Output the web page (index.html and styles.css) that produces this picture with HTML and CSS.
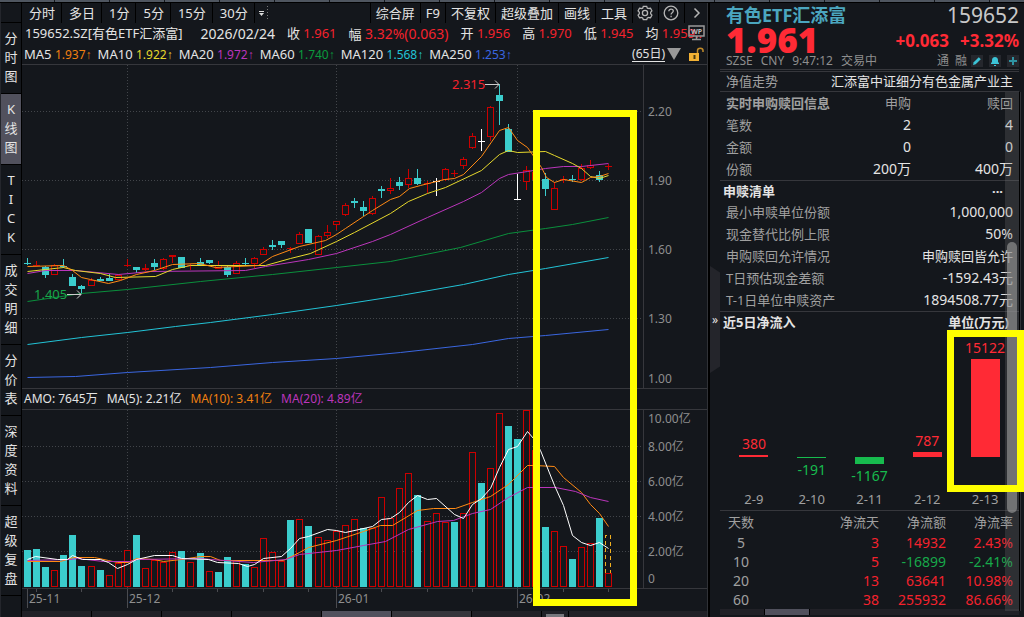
FILE: index.html
```html
<!DOCTYPE html>
<html lang="zh-CN">
<head>
    <meta charset="UTF-8">
    <title>159652.SZ 有色ETF汇添富</title>
    <link rel="stylesheet" href="styles.css">
</head>
<body>
    <div class="top-strip"></div>
    <div class="layout">
        <nav class="sidebar">
            <button>分<br>时<br>图</button>
            <button class="active">K<br>线<br>图</button>
            <button>T<br>I<br>C<br>K</button>
            <button>成<br>交<br>明<br>细</button>
            <button>分<br>价<br>表</button>
            <button>深<br>度<br>资<br>料</button>
            <button>超<br>级<br>复<br>盘</button>
        </nav>

        <main class="main">
            <div class="toolbar">
                <button class="period">分时</button>
                <button class="period">多日</button>
                <button class="period">1分</button>
                <button class="period">5分</button>
                <button class="period">15分</button>
                <button class="period">30分</button>
                <button class="more" aria-label="更多周期">
                    <svg width="14" height="18" viewBox="0 0 14 18"><path d="M1 7.500h5" stroke="#ddd"/><path d="M1 9h5l-2.500 3z" fill="#ddd"/><path d="M9.500 2v14" stroke="#777" stroke-dasharray="1 2"/></svg>
                </button>
                <span class="spacer"></span>
                <button>综合屏</button>
                <button>F9</button>
                <button>不复权</button>
                <button>超级叠加</button>
                <button>画线</button>
                <button>工具</button>
                <button class="icon" aria-label="设置">
                    <svg width="16" height="16" viewBox="0 0 16 16" fill="none" stroke="#b5b5b5" stroke-width="1.3"><path d="M6.300 1.300h3.400l.6 1.800 1.900.4 1.300-.3 1.400 2.600-1.200 1.400v1.600l1.200 1.400-1.400 2.600-1.800-.3-1.400.5-.6 1.700H6.300l-.6-1.700-1.400-.5-1.800.3-1.400-2.600 1.200-1.400V7.200L1.100 5.800l1.400-2.600 1.800.3 1.400-.4z"/><circle cx="8" cy="8" r="2.600"/></svg>
                </button>
                <button class="icon" aria-label="帮助">
                    <svg width="16" height="16" viewBox="0 0 16 16" fill="none" stroke="#b5b5b5" stroke-width="1.3"><circle cx="8" cy="8" r="6.800"/><path d="M5.800 6.300c0-3 4.500-2.700 4.500-.2 0 1.600-2.200 1.600-2.200 3.300M8.100 10.800v1.400"/></svg>
                </button>
                <button class="icon last" aria-label="展开">
                    <svg width="16" height="16" viewBox="0 0 16 16" fill="none" stroke="#b5b5b5" stroke-width="1.5"><path d="M5.500 3.500L10 8l-4.500 4.500"/></svg>
                </button>
            </div>

            <div class="quote">
                <span class="symbol">159652.SZ[有色ETF汇添富]</span>
                <span class="date">2026/02/24</span>
                <span>收 <b class="red">1.961</b></span>
                <span>幅 <b class="red wide">3.32%(0.063)</b></span>
                <span>开 <b class="red">1.956</b></span>
                <span>高 <b class="red">1.970</b></span>
                <span>低 <b class="red">1.945</b></span>
                <span>均 <b class="red">1.959..</b></span>
                <svg class="wp" width="17" height="16" viewBox="0 0 17 16"><path d="M1 1h15v10H1zM8.500 11v3M4 14.500h9" fill="none" stroke="#999" stroke-width="1.5"/><text x="8.500" y="9" text-anchor="middle">WP</text></svg>
            </div>

            <div class="averages">
                <span>MA5 <b class="orange">1.937<i>↑</i></b></span>
                <span>MA10 <b class="yellow">1.922<i>↑</i></b></span>
                <span>MA20 <b class="purple">1.972<i>↑</i></b></span>
                <span>MA60 <b class="green">1.740<i>↑</i></b></span>
                <span>MA120 <b class="cyan">1.568<i>↑</i></b></span>
                <span>MA250 <b class="blue">1.253<i>↑</i></b></span>
                <span class="spacer"></span>
                <button class="range">(65日)</button>
                <svg width="14" height="12" viewBox="0 0 14 12"><path d="M0 0h14L7 12z" fill="#999"/></svg>
                <svg class="lock" width="16" height="15" viewBox="0 0 16 15"><path d="M0 6h10v8H0z" fill="#f2b134"/><path d="M4.500 8h2v4h-2z" fill="#4a3a10"/><path d="M8.500 6V3.500C8.500.5 14 .5 14 3.500V5" fill="none" stroke="#c08a2a" stroke-width="1.5"/></svg>
            </div>

            <svg class="chart" id="price" viewBox="22 65 685 323"></svg>

            <div class="amount">
                <span>AMO: 7645万</span>
                <span>MA(5): 2.21亿</span>
                <span class="orange">MA(10): 3.41亿</span>
                <span class="purple">MA(20): 4.89亿</span>
            </div>

            <svg class="chart" id="volume" viewBox="22 410 685 201"></svg>

            <div class="tabs main-tabs">
                <i></i><i></i><i></i><i></i><i class="on"></i><i class="half"></i><i></i><i class="win"></i><i></i>
            </div>
            <div class="mark mark-chart"></div>
        </main>

        <aside class="panel">
            <button class="collapse" aria-label="收起">»</button>
            <div class="content">
                <header class="head">
                    <div class="head-row">
                        <h1>有色ETF汇添富</h1>
                        <span class="code">159652</span>
                    </div>
                    <div class="head-row price-row">
                        <strong class="last-price">1.961</strong>
                        <span class="change">+0.063</span>
                        <span class="change">+3.32%</span>
                    </div>
                    <div class="head-row info">
                        <span>SZSE</span><span>CNY</span><span>9:47:12</span><span>交易中</span>
                        <span class="spacer"></span>
                        <span class="tag">通</span><span class="tag">融</span>
                        <button aria-label="编辑"><svg width="12" height="12" viewBox="0 0 12 12"><path d="M2 10l.7-2.700L7.800 2.200l2 2L4.700 9.300z" fill="#3cc3d6"/></svg></button>
                        <button aria-label="提醒"><svg width="12" height="12" viewBox="0 0 12 12"><path d="M2 9V8l1-1V5c0-4 6-4 6 0v2l1 1v1zM5 10h2v1H5z" fill="#3cc3d6"/></svg></button>
                        <button aria-label="添加"><svg width="12" height="12" viewBox="0 0 12 12"><path d="M6 2v8M2 6h8" stroke="#2f93a3" stroke-width="2"/></svg></button>
                    </div>
                </header>

                <div class="row trend"><span>净值走势</span><a href="#">汇添富中证细分有色金属产业主</a></div>

                <table class="live">
                    <tr><th>实时申购赎回信息</th><td class="dim">申购</td><td class="dim">赎回</td></tr>
                    <tr><td>笔数</td><td>2</td><td>4</td></tr>
                    <tr><td>金额</td><td>0</td><td>0</td></tr>
                    <tr><td>份额</td><td>200万</td><td>400万</td></tr>
                </table>

                <section class="list">
                    <div class="row title"><h2>申赎清单</h2><button class="dots">···</button></div>
                    <div class="row"><span>最小申赎单位份额</span><b>1,000,000</b></div>
                    <div class="row"><span>现金替代比例上限</span><b>50%</b></div>
                    <div class="row"><span>申购赎回允许情况</span><b class="cn">申购赎回皆允许</b></div>
                    <div class="row"><span>T日预估现金差额</span><b>-1592.43元</b></div>
                    <div class="row"><span>T-1日单位申赎资产</span><b>1894508.77元</b></div>
                </section>

                <section class="flow">
                    <div class="row title"><h2>近5日净流入</h2><h2>单位(万元)</h2></div>
                    <div class="bars">
                        <div class="col"><div class="up"><span>380</span><i style="height:2px"></i></div><div class="down"></div><small>2-9</small></div>
                        <div class="col"><div class="up"></div><div class="down"><i style="height:1px"></i><span>-191</span></div><small>2-10</small></div>
                        <div class="col"><div class="up"></div><div class="down"><i style="height:7px"></i><span>-1167</span></div><small>2-11</small></div>
                        <div class="col"><div class="up"><span>787</span><i style="height:5px"></i></div><div class="down"></div><small>2-12</small></div>
                        <div class="col"><div class="up"><span>15122</span><i style="height:98px"></i></div><div class="down"></div><small>2-13</small></div>
                    </div>
                </section>

                <table class="days">
                    <tr><th>天数</th><th>净流天</th><th>净流额</th><th>净流率</th></tr>
                    <tr class="red"><td>5</td><td>3</td><td>14932</td><td>2.43%</td></tr>
                    <tr class="down-row"><td>10</td><td class="red">5</td><td>-16899</td><td>-2.41%</td></tr>
                    <tr class="red"><td>20</td><td>13</td><td>63641</td><td>10.98%</td></tr>
                    <tr class="red"><td>60</td><td>38</td><td>255932</td><td>86.66%</td></tr>
                </table>
                <div class="tabs panel-tabs"><i></i><i class="on"></i><i></i></div>
                <div class="track"><div class="thumb"></div></div>
                <div class="mark mark-flow"></div>
            </div>
        </aside>
    </div>
    <script src="chart.js"></script>
</body>
</html>
```
FILE: styles.css
```css
* {
    box-sizing: border-box;
}

body {
    margin: 0;
    min-height: 100vh;
    background-color: #14171c;
    color: #e4e4e4;
    font-family: "Noto Sans", "Noto Sans CJK SC", sans-serif;
    font-size: 13px;
    overflow: hidden;
}

button {
    margin: 0;
    padding: 0;
    border: none;
    background: none;
    color: inherit;
    font: inherit;
    cursor: pointer;
}

b, i, small, h1, h2 {
    margin: 0;
    font-weight: normal;
    font-style: normal;
}

a {
    color: inherit;
    text-decoration: none;
}

svg {
    display: block;
    flex: none;
}

.red { color: #f5222d; }
.orange { color: #f08010; }
.yellow { color: #e6d82c; }
.purple { color: #bb35bb; }
.green { color: #0a9a3c; }
.cyan { color: #22c3d6; }
.blue { color: #3a66e0; }

.spacer {
    flex: 1;
}

.top-strip {
    height: 3px;
    border-bottom: 1px solid #000;
    background: repeating-linear-gradient(90deg, #4f5660 0 54px, #14171c 54px 55px);
}

.layout {
    display: grid;
    grid-template-columns: 22px minmax(0, 1fr) 316px;
}

/* left navigation */
.sidebar {
    padding-top: 19px;
    border-left: 1px solid #24262c;
    border-right: 1px solid #000;
    display: flex;
    flex-direction: column;
}

.sidebar button {
    padding: 6px 0 7px;
    border-top: 1px solid #000;
    line-height: 19px;
    text-align: center;
}

.sidebar button:last-child {
    border-bottom: 1px solid #000;
}

.sidebar .active {
    background-color: #51515d;
}

.main {
    position: relative;
    border-right: 1px solid #303237;
}

.toolbar {
    display: flex;
    height: 20px;
    line-height: 18px;
}

.toolbar button {
    padding: 0 5px;
    border-left: 1px solid #000;
    white-space: nowrap;
}

.toolbar .period {
    padding: 0 6px 0 7px;
    border-left: none;
    border-right: 1px solid #000;
}

.toolbar .more {
    padding: 0 3px;
    border-left: none;
}

.toolbar .icon {
    padding: 0 5px 0 4px;
}

.toolbar .last {
    padding-right: 2px;
}

.quote, .averages {
    position: relative;
    display: flex;
    align-items: center;
    height: 21px;
    padding-left: 3px;
    white-space: nowrap;
}

.quote {
    gap: 12px;
    line-height: 21px;
    overflow: hidden;
}

.quote .date {
    margin-left: 6px;
    font-size: 14px;
}

.quote .wide {
    font-size: 14px;
}

.wp {
    position: absolute;
    right: 2px;
    top: 2px;
}

.wp text {
    fill: #bbb;
    font-size: 7px;
    font-weight: bold;
}

.averages {
    gap: 6px;
    padding-left: 2px;
    padding-right: 2px;
    border-bottom: 1px solid #36373c;
}

.averages b {
    font-size: 12px;
}

.averages i {
    font-family: "Liberation Sans", sans-serif;
}

.averages .range {
    border-bottom: 1px solid #e4e4e4;
    font-size: 12px;
    line-height: 14px;
}

.averages svg {
    margin-left: -4px;
}

.averages .lock {
    margin-left: 2px;
}

.chart {
    width: 100%;
    height: auto;
}

.chart text {
    fill: #8e8e8e;
    font-size: 12px;
}

.chart .high {
    fill: #f5222d;
    font-size: 13px;
}

.chart .low {
    fill: #17a84a;
    font-size: 13px;
}

.amount {
    display: flex;
    gap: 9px;
    height: 22px;
    padding-left: 2px;
    border-top: 1px solid #36373c;
    border-bottom: 1px solid #36373c;
    font-size: 12px;
    line-height: 20px;
    white-space: nowrap;
}

.tabs {
    display: flex;
    height: 6px;
    gap: 1px;
    background-color: #000;
}

.tabs i {
    flex: 7;
    background-color: #212127;
}

.tabs .on {
    background-color: #51515d;
}

.tabs .half {
    flex: 8;
    background-color: #36363c;
}

.main-tabs i:nth-child(4) {
    flex: 9;
}

.main-tabs .win {
    flex: 0 0 26px;
    border: solid #212127;
    border-width: 3px 4px 0;
    background-color: #77777d;
}

.main-tabs i:last-child {
    flex: 14;
}

.panel-tabs i {
    flex: 0 0 44px;
}

.panel-tabs i:last-child {
    flex: 1;
}

.mark {
    position: absolute;
    border: 7px solid #ffff00;
    pointer-events: none;
}

.mark-chart {
    top: 107px;
    right: 70px;
    width: 104px;
    height: 496px;
}

/* right panel */
.panel {
    display: grid;
    grid-template-columns: 10px 1fr;
    border-left: 2px solid #000;
}

.collapse {
    align-self: start;
    height: 107px;
    margin-top: 263px;
    background-color: #24252b;
    clip-path: polygon(0 0, 100% 6%, 100% 94%, 0 100%);
    font-size: 12px;
}

.content {
    position: relative;
    padding-right: 5px;
}

.head {
    padding: 0 0 0 6px;
    border-bottom: 3px double #36373c;
}

.head-row {
    display: flex;
    align-items: center;
    height: 24px;
}

h1 {
    flex: 1;
    color: #4ba6bf;
    font-size: 18px;
    font-weight: bold;
    line-height: 24px;
}

.code {
    color: #c8c8c8;
    font-size: 21px;
    line-height: 24px;
}

.price-row {
    height: 26px;
    gap: 11px;
    color: #ff2a35;
    font-weight: bold;
}

.last-price {
    flex: 1;
    font-size: 35px;
    line-height: 26px;
}

.change {
    font-size: 17px;
}

.info {
    gap: 8px;
    height: 16px;
    color: #8e8e8e;
    font-size: 12px;
    line-height: 16px;
}

.info .tag {
    margin-right: -2px;
}

.info button {
    margin-left: -2px;
    background-color: #25272d;
}

.row {
    display: flex;
    justify-content: space-between;
    height: 22px;
    padding: 0 6px;
    line-height: 22px;
    white-space: nowrap;
}

.row span {
    color: #a0a0a0;
}

.row b {
    font-size: 14px;
}

.row .cn {
    font-size: 13px;
}

.trend {
    height: 20px;
    line-height: 19px;
    border-bottom: 1px solid #36373c;
}

table {
    width: 100%;
    border-collapse: collapse;
}

th, td {
    padding: 0;
}

.live {
    border-bottom: 1px solid #36373c;
}

.live tr {
    height: 22px;
    line-height: 22px;
}

.live td {
    width: 27%;
    text-align: right;
    font-size: 14px;
}

.live td:last-child {
    width: 108px;
    padding-right: 6px;
}

.live th, .live td:first-child {
    width: auto;
    padding-left: 6px;
    color: #a0a0a0;
    font-size: 13px;
    text-align: left;
}

.live .dim {
    color: #a0a0a0;
    font-size: 13px;
}

.list {
    border-bottom: 1px solid #36373c;
}

.title {
    padding-left: 3px;
}

.title h2 {
    font-size: 13px;
    font-weight: bold;
}

.list .title {
    height: 20px;
    line-height: 20px;
}

.flow .title {
    padding-right: 10px;
    height: 21px;
    line-height: 20px;
}

.dots {
    margin-right: 10px;
    font-weight: bold;
}

.flow {
    border-bottom: 1px solid #36373c;
}

.bars {
    display: grid;
    grid-template-columns: repeat(5, 1fr);
    padding: 0 5px;
}

.col {
    display: flex;
    flex-direction: column;
    align-items: center;
    font-size: 14px;
}

.up, .down {
    display: flex;
    flex-direction: column;
    align-items: center;
}

.up {
    height: 124px;
    justify-content: flex-end;
    color: #ff2a35;
}

.down {
    height: 31px;
    color: #17bb4e;
}

.up i, .down i {
    width: 29px;
    background-color: currentColor;
}

.up span, .down span {
    line-height: 23px;
}

.col small {
    color: #a0a0a0;
    font-size: 13px;
    line-height: 22px;
}

.days {
    font-size: 14px;
    text-align: right;
}

.days tr {
    height: 19px;
    line-height: 19px;
}

.days tr:first-child {
    height: 22px;
}

.days th {
    color: #a0a0a0;
    font-size: 13px;
    font-weight: normal;
}

.days th:first-child, .days td:first-child {
    width: 42px;
    color: #a0a0a0;
    text-align: center;
}

.days th:nth-child(3), .days td:nth-child(3) {
    width: 67px;
}

.days th:last-child, .days td:last-child {
    width: 73px;
    padding-right: 6px;
}

.down-row {
    color: #17a84a;
}

.track {
    position: absolute;
    top: 89px;
    right: 5px;
    bottom: 6px;
    width: 14px;
    background-color: rgba(120, 120, 120, 0.25);
    box-shadow: 1px 0 0 #000, 2px 0 0 #303237;
}

.thumb {
    height: 271px;
    margin: 150px 2px 0;
    border-radius: 5px;
    background-color: rgba(150, 150, 150, 0.65);
}

.mark-flow {
    top: 327px;
    right: 0;
    width: 77px;
    height: 162px;
}
```
FILE: chart.js
```js
// x of the first candle and distance between candles
const START = 27;
const STEP = 9.08;
const COLORS = { c: '#3bcdcd', r: '#cc0000', w: '#ffffff' };

// colour, high, body top, body bottom, low
const candles = [
    ['c', 258, 263, 264, 265], ['r', 261, 265, 266, 266], ['c', 266, 267, 275, 278], ['r', 264, 265, 275, 275],
    ['c', 259, 266, 267, 268], ['c', 274, 277, 286, 286], ['c', 285, 286, 289, 294], ['r', 278, 280, 286, 286],
    ['c', 277, 279, 281, 281], ['c', 274, 278, 281, 281], ['r', 274, 275, 280, 280], ['r', 259, 265, 266, 267],
    ['c', 267, 267, 270, 273], ['r', 264, 268, 270, 271], ['c', 259, 263, 267, 270], ['r', 258, 259, 269, 270],
    ['r', 255, 255, 257, 263], ['c', 257, 257, 268, 268], ['r', 264, 265, 266, 270], ['c', 258, 262, 266, 266],
    ['c', 260, 260, 263, 264], ['r', 261, 265, 269, 269], ['c', 266, 267, 275, 277], ['r', 261, 263, 274, 274],
    ['c', 258, 263, 264, 266], ['r', 257, 258, 264, 268], ['r', 247, 249, 255, 255], ['c', 240, 245, 247, 250],
    ['c', 241, 241, 245, 248], ['r', 247, 248, 249, 253], ['r', 232, 234, 244, 244], ['c', 229, 229, 243, 243],
    ['r', 235, 236, 255, 255], ['r', 225, 232, 236, 238], ['r', 221, 221, 225, 230], ['r', 203, 205, 215, 216],
    ['c', 198, 201, 203, 208], ['c', 201, 207, 211, 216], ['r', 196, 198, 214, 215], ['c', 186, 189, 191, 198],
    ['r', 178, 188, 191, 194], ['c', 177, 182, 186, 190], ['r', 169, 178, 185, 188], ['c', 169, 178, 184, 185],
    ['r', 181, 183, 184, 193], ['w', 178, 181, 182, 196], ['r', 168, 169, 180, 181], ['r', 170, 173, 174, 177],
    ['r', 157, 159, 166, 169], ['r', 133, 136, 148, 149], ['w', 129, 141, 142, 151], ['r', 106, 107, 137, 141],
    ['c', 84, 95, 101, 125], ['c', 124, 129, 152, 152], ['w', 174, 199, 200, 200], ['r', 166, 170, 182, 190],
    ['r', 170, 172, 180, 184], ['c', 173, 179, 189, 196], ['r', 182, 188, 210, 210], ['r', 176, 179, 180, 183],
    ['c', 175, 179, 180, 182], ['r', 164, 168, 180, 181], ['r', 160, 165, 168, 169], ['c', 171, 175, 180, 182],
    ['r', 164, 166, 167, 170]
];

const volumes = ('c550 c549 c567 r570 c555 c535 c566 r566 c570 r575 r563 r550 c535 r568 r560 r562 r552 c551 r562 c553 ' +
    'r571 c572 c557 r560 c564 r567 r538 r552 r561 c520 r519 c526 r537 r540 r531 r525 r519 c528 r528 r497 ' +
    'r518 r488 r473 c495 r521 r513 r522 c522 r513 r452 c483 r468 r413 c426 c439 r410 r450 c527 r531 r546 ' +
    'c559 r547 r543 c518 r573').split(' ');

const priceLines = {
    '#3a66e0': '27,377 75,376 127,372 210,367 272,362 336,358 400,352 472,344 508,338 545,335 608,329',
    '#22c3d6': '27,344 81,337 127,332 175,326 210,322 272,314 336,305 400,295 463,284 508,274 545,268 608,257',
    '#0a8f3c': '27,301 81,293 127,289 200,281 272,274 336,267 390,261 460,247 508,233 545,228 572,224 608,217',
    '#bb35bb': '27,273 45,270 75,270 118,274 150,271 245,270 265,266 308,259 336,253 372,241 390,234 427,217 463,201 481,192 499,178 508,174 527,171 545,168 563,166 581,166 608,163',
    '#e6d82c': '27,271 45,269 63,267 75,270 100,273 115,277 155,276 172,269 190,265 265,265 290,258 310,253 336,241 354,232 390,213 408,201 427,193 445,187 481,170 499,154 508,150 517,152 545,151 554,155 572,163 581,168 590,176 599,178 608,175',
    '#ff8a14': '27,266 63,265 72,270 81,277 90,279 108,283 120,280 136,274 154,270 172,264 199,263 215,267 258,265 272,256 299,246 325,240 336,234 345,228 363,216 372,210 390,199 399,196 409,188 420,185 444,179 454,178 463,174 481,156 499,130 508,127 517,140 527,147 541,167 546,177 554,182 563,179 581,182 590,177 599,176 608,173'
};

const volumeLines = {
    '#ff8a14': '27,561 60,561 73,557 94,557 108,560 117,562 128,562 136,558 154,559 163,561 181,559 200,556 210,556 220,560 283,560 299,552 308,547 336,540 363,531 380,525 392,525 417,510 433,508 455,508 472,502 490,496 508,484 527,465 534,465 554,466 563,477 581,492 590,504 599,513 608,526',
    '#bb35bb': '27,560 70,559 77,558 103,561 130,561 137,559 200,558 210,559 253,562 285,559 299,554 336,550 363,545 385,541 408,529 437,521 453,520 472,513 490,509 508,497 527,487 555,487 575,491 590,497 608,501',
    '#ffffff': '27,559 35,556 57,559 67,559 72,555 82,559 100,559 108,562 117,568 127,564 136,559 154,555 172,555 181,558 208,559 217,562 238,563 247,566 254,564 263,558 281,556 290,548 299,538 308,536 327,529 336,530 345,532 372,526 381,519 390,518 399,512 408,502 417,495 427,499 436,498 454,514 463,518 472,504 481,498 490,488 499,467 508,449 517,446 527,431 533,438 540,450 554,485 563,505 572,535 581,542 590,545 599,542 608,548'
};

function line(x1, y1, x2, y2, color, dash) {
    return `<path d="M${x1} ${y1}L${x2} ${y2}" stroke="${color}" shape-rendering="crispEdges" ${dash ? 'stroke-dasharray="1 2"' : ''}/>`;
}

function grid(rows, top, bottom) {
    let out = '';
    for (const y of rows) out += line(22, y + 0.5, 643, y + 0.5, '#42454a', true);
    for (const x of [127, 336, 517]) out += line(x + 0.5, top, x + 0.5, bottom, '#42454a', true);
    return out + line(643.5, top, 643.5, bottom, '#36373c');
}

function polylines(lines) {
    let out = '';
    for (const color in lines) {
        out += `<polyline points="${lines[color]}" transform="translate(.5 .5)" fill="none" stroke="${color}"/>`;
    }
    return out;
}

// hollow for rising days, filled for falling days
function box(x, top, bottom, kind) {
    const h = Math.max(bottom - top, 1);
    if (kind === 'r' && h > 2) {
        return `<rect x="${x - 2.5}" y="${top + 0.5}" width="6" height="${h - 1}" fill="#14171c" stroke="${COLORS.r}" shape-rendering="crispEdges"/>`;
    }
    return `<rect x="${x - 3}" y="${top}" width="7" height="${h}" fill="${COLORS[kind]}" shape-rendering="crispEdges"/>`;
}

function drawPrice() {
    let out = grid([111, 180, 249, 318], 65, 388);
    candles.forEach(([kind, high, top, bottom, low], i) => {
        const x = Math.round(START + STEP * i);
        out += line(x + 0.5, high, x + 0.5, low, COLORS[kind]) + box(x, top, bottom, kind);
    });
    out += polylines(priceLines);
    [['2.20', 116], ['1.90', 185], ['1.60', 254], ['1.30', 323], ['1.00', 383]].forEach(([t, y]) => {
        out += `<text x="648" y="${y}">${t}</text>`;
    });
    out += '<text class="high" x="452" y="89">2.315</text><path d="M485 84.5h14m-4-4l4 4l-4 4" fill="none" stroke="#ccc"/>';
    out += '<text class="low" x="34" y="299">1.405</text><path d="M67 294.5h14m-4-4l4 4l-4 4" fill="none" stroke="#ccc"/>';
    document.getElementById('price').innerHTML = out;
}

function drawVolume() {
    let out = grid([446, 481, 516, 551], 410, 588);
    volumes.forEach((v, i) => {
        out += box(Math.round(START + STEP * i), Number(v.slice(1)), 587, v[0]);
    });
    // estimated turnover of the current day
    out += '<path d="M605.5 573V535.5H610.5V573" fill="none" stroke="#f0b020" stroke-dasharray="4 3" shape-rendering="crispEdges"/>';
    out += polylines(volumeLines);
    out += line(22, 588.5, 708, 588.5, '#36373c');
    [['10.00亿', 423], ['8.00亿', 451], ['6.00亿', 486], ['4.00亿', 521], ['2.00亿', 556], ['0', 583]].forEach(([t, y]) => {
        out += `<text x="648" y="${y}">${t}</text>`;
    });
    [['25-11', 27], ['25-12', 127], ['26-01', 336], ['26-02', 517]].forEach(([t, x]) => {
        out += line(x + 0.5, 589, x + 0.5, 608, '#4a4b50') + `<text x="${x + 2}" y="603">${t}</text>`;
    });
    for (const x of [36, 81, 172, 217, 263, 308, 381, 427, 472, 563, 608]) {
        out += line(x + 0.5, 589, x + 0.5, 592, '#4a4b50');
    }
    document.getElementById('volume').innerHTML = out;
}

drawPrice();
drawVolume();
```
